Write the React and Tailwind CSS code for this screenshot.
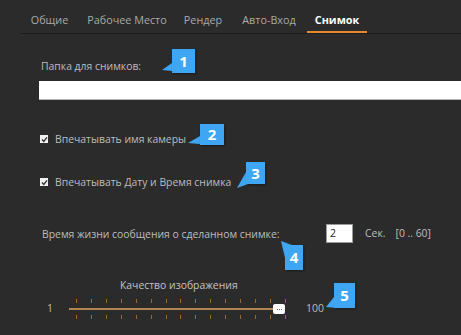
import { useState } from "react";

const tabs = [
  { label: "Общие", w: "w-[59px]" },
  { label: "Рабочее Место", w: "w-[96px]" },
  { label: "Рендер", w: "w-[56px]" },
  { label: "Авто-Вход", w: "w-[76px]" },
  { label: "Снимок", w: "w-[60px]", active: true },
];

function Check() {
  return (
    <span className="flex h-[8px] w-[8px] items-center justify-center bg-[#f0f0f0]">
      <svg width="7" height="7" viewBox="0 0 7 7">
        <path d="M1 3.6 L2.8 5.4 L6 1.4" fill="none" stroke="#333" strokeWidth="1.4" />
      </svg>
    </span>
  );
}

// выноска с номером, лежит поверх формы
function Callout({ n, box, tail }) {
  return (
    <>
      <svg className="pointer-events-none absolute left-0 top-0" width="461" height="335">
        <polygon points={tail} fill="#3ea6f2" />
      </svg>
      <div
        className={`absolute flex items-center justify-center bg-[#3ea6f2] text-[15px] font-bold text-white shadow-[1px_1px_2px_rgba(0,0,0,0.4)] ${box}`}
      >
        {n}
      </div>
    </>
  );
}

export default function App() {
  const [printCam, setPrintCam] = useState(true);
  const [printDate, setPrintDate] = useState(true);
  const ticks = Array.from({ length: 15 });

  return (
    <div className="relative h-[335px] w-[461px] overflow-hidden bg-[#2b2b2b] font-['Open_Sans',sans-serif] text-[10.4px] text-[#bdbdbd]">
      <div className="ml-[20px] flex h-[34px] border-b border-[#1d1d1d] text-[10.8px]">
        {tabs.map((t) => (
          <div
            key={t.label}
            className={`${t.w} border-b-2 pt-[12px] text-center leading-[16px] ${
              t.active ? "border-[#e38a2e] font-bold text-white" : "border-transparent text-[#a9a9a9]"
            }`}
          >
            {t.label}
          </div>
        ))}
      </div>

      <div className="pl-[41px] pt-[24px] leading-[16px]">Папка для снимков:</div>
      <div className="ml-[39px] mt-[7px] h-[19px] border-b border-[#b5b5b5] bg-white" />

      <label className="ml-[40px] mt-[31px] flex items-center gap-[7px]" onClick={() => setPrintCam(!printCam)}>
        <Check />
        <span className="leading-[16px]">Впечатывать имя камеры</span>
      </label>
      <label className="ml-[40px] mt-[27px] flex items-center gap-[7px]" onClick={() => setPrintDate(!printDate)}>
        <Check />
        <span className="leading-[16px]">Впечатывать Дату и Время снимка</span>
      </label>

      <div className="ml-[42px] mt-[34px] flex items-center">
        <span className="w-[284px] leading-[16px]">Время жизни сообщения о сделанном снимке:</span>
        <div className="flex h-[19px] w-[27px] items-center border border-[#9a9a9a] bg-white pl-[3px] text-[#222]">2</div>
        <span className="ml-[12px]">Сек.</span>
        <span className="ml-[10px]">[0 .. 60]</span>
      </div>

      <div className="ml-[120px] mt-[34px] leading-[16px] text-[#c4c4c4]">Качество изображения</div>
      <div className="mt-[5px] flex items-center">
        <span className="ml-[47px] w-[22px]">1</span>
        <div className="relative h-[22px] w-[217px]">
          <div className="absolute left-[7px] top-[1px] flex w-[210px] justify-between">
            {ticks.map((_, i) => (
              <span key={i} className="h-[4px] w-px bg-[#a4682a]" />
            ))}
          </div>
          <div className="absolute left-0 top-[10px] h-[2px] w-[214px] bg-[#b3864f]" />
          <div className="absolute left-[7px] top-[17px] flex w-[210px] justify-between">
            {ticks.map((_, i) => (
              <span key={i} className="h-[4px] w-px bg-[#a4682a]" />
            ))}
          </div>
          <div className="absolute left-[204px] top-[6px] flex h-[10px] w-[12px] items-center justify-center gap-px rounded-[2px] bg-white">
            <span className="h-px w-px bg-[#666]" />
            <span className="h-px w-px bg-[#666]" />
            <span className="h-px w-px bg-[#666]" />
          </div>
        </div>
        <span className="ml-[20px]">100</span>
      </div>

      <Callout n="1" box="left-[172px] top-[49px] h-[24px] w-[23px]" tail="172,63 172,71 162,70" />
      <Callout n="2" box="left-[200px] top-[124px] h-[21px] w-[24px]" tail="200,136 200,144 188,143" />
      <Callout n="3" box="left-[246px] top-[162px] h-[22px] w-[19px]" tail="246,172 251,183 237,188" />
      <Callout n="4" box="left-[285px] top-[245px] h-[25px] w-[18px]" tail="281,241 292,245 285,258" />
      <Callout n="5" box="left-[334px] top-[283px] h-[25px] w-[21px]" tail="334,297 338,308 326,307" />
    </div>
  );
}
